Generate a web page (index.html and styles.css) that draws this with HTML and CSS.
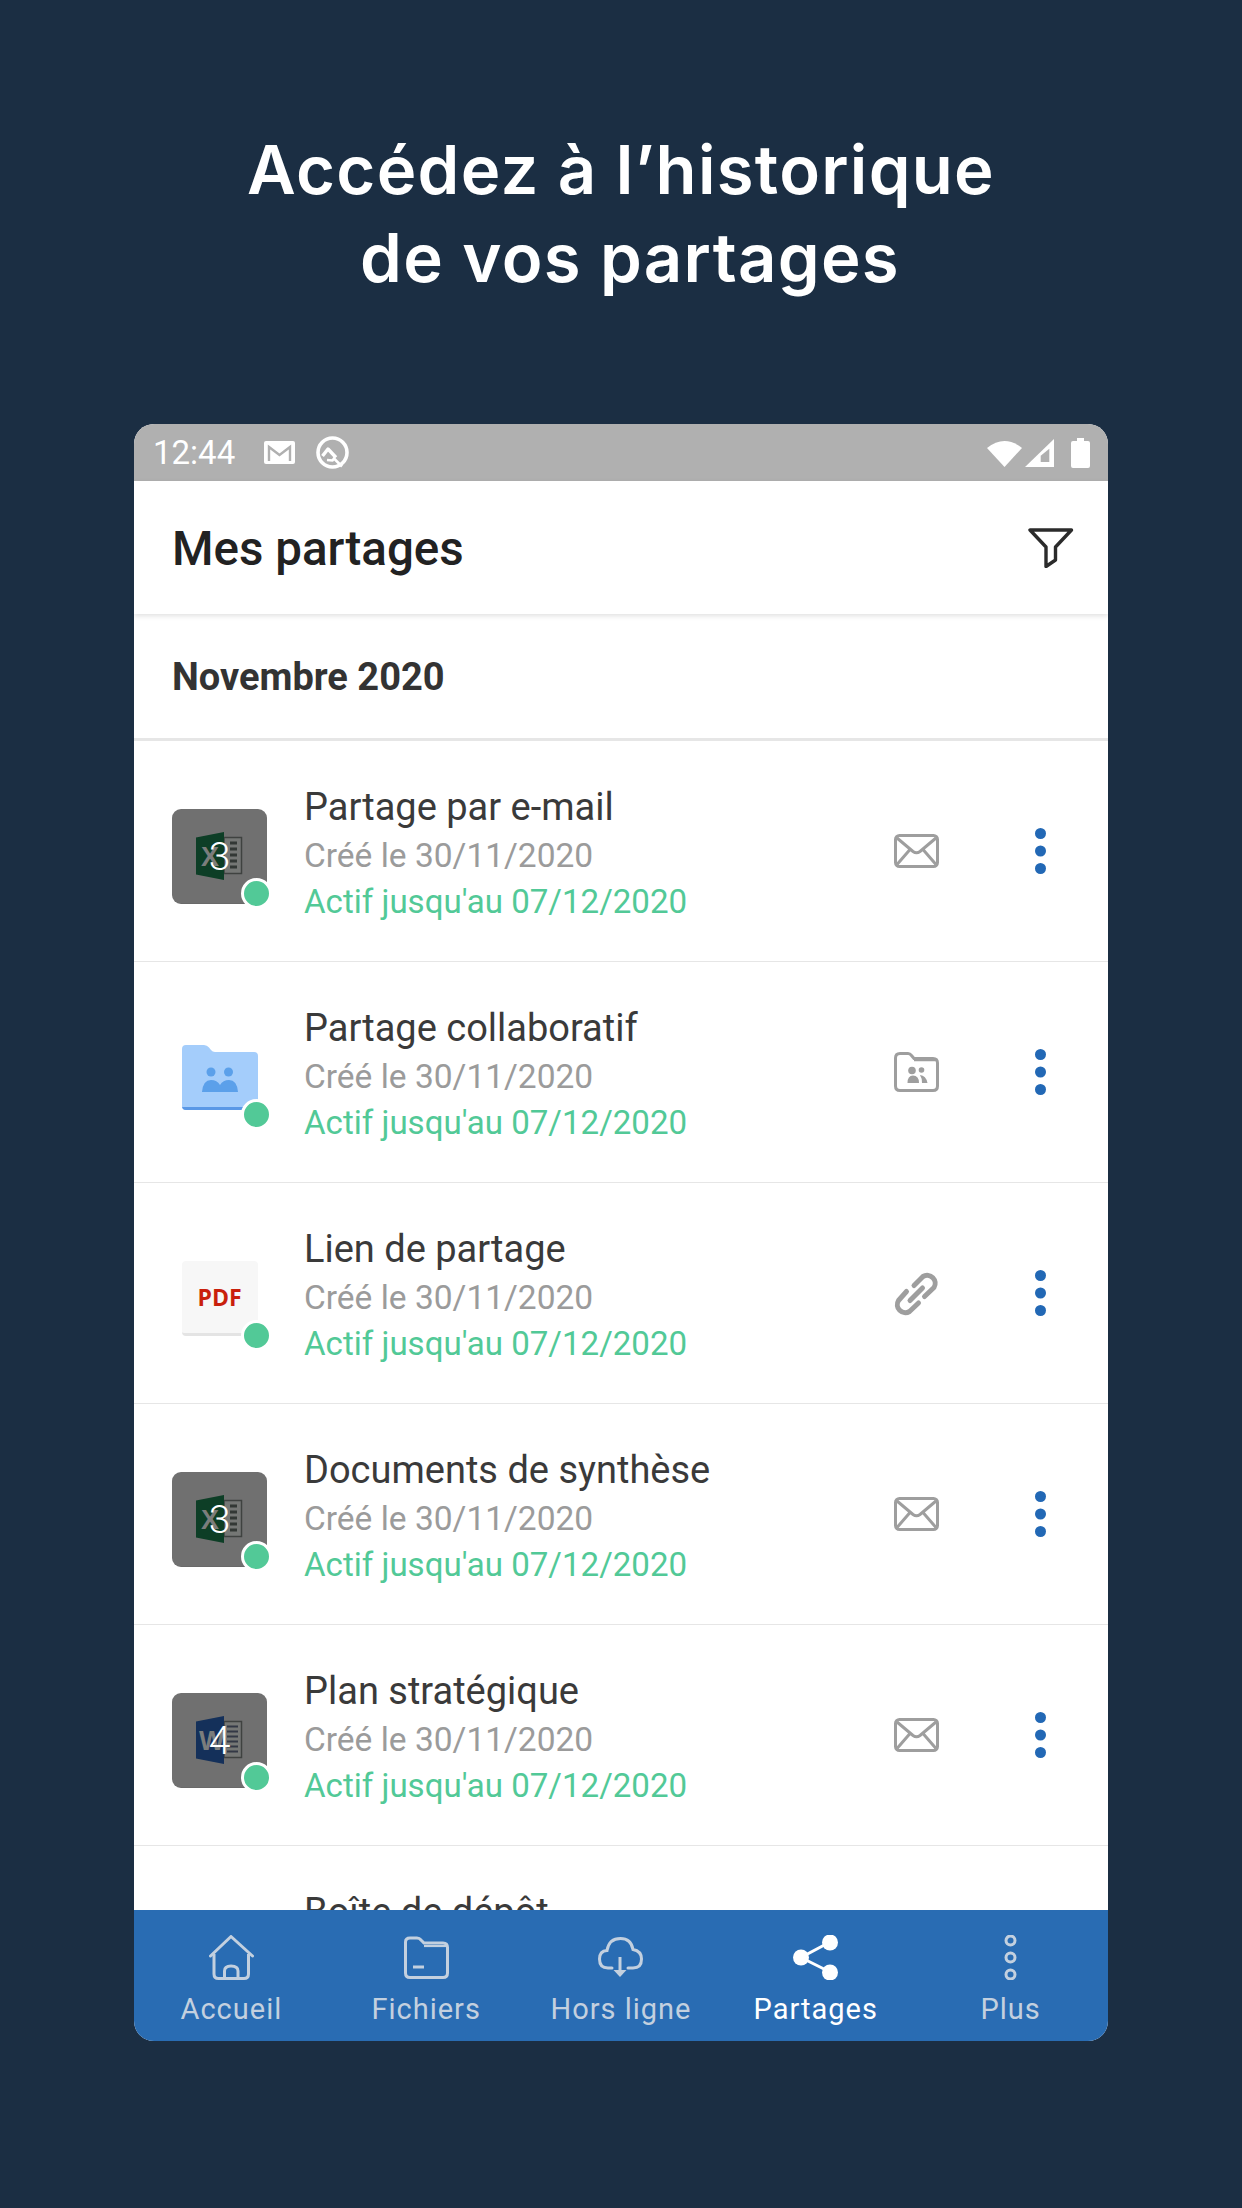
FILE: index.html
```html
<!DOCTYPE html>
<html lang="fr">
<head>
<meta charset="utf-8">
<title>Mes partages</title>
<link rel="stylesheet" href="styles.css">
</head>
<body>
<svg class="defs" width="0" height="0" aria-hidden="true">
  <defs>
    <symbol id="ic-mail" viewBox="0 0 45 34">
      <rect x="1.500" y="1.500" width="42" height="31" rx="4" fill="none" stroke="currentColor" stroke-width="3"/>
      <path d="M3 4 L19 17.500 Q22.500 20 26 17.500 L42 4 M3 30.500 L16 15.500 M42 30.500 L29 15.500" fill="none" stroke="currentColor" stroke-width="3"/>
    </symbol>
    <symbol id="ic-folder-people" viewBox="0 0 45 40">
      <path d="M1.500 6 Q1.500 1.500 6 1.500 H14 Q16 1.500 17.500 3.500 L20 6.500 H39 Q43.500 6.500 43.500 11 V34 Q43.500 38.500 39 38.500 H6 Q1.500 38.500 1.500 34 Z" fill="none" stroke="currentColor" stroke-width="3"/>
      <path d="M20 8.500 H42" fill="none" stroke="currentColor" stroke-width="1.500"/>
      <circle cx="18" cy="18.500" r="3.800" fill="currentColor"/>
      <circle cx="27.500" cy="18" r="2.800" fill="currentColor"/>
      <path d="M13.500 31 Q13.500 23.500 19 23.500 Q25 23.500 25 31 Z M26 23 Q32 23.500 33.500 31 H28 Q28 26 26 23 Z" fill="currentColor"/>
    </symbol>
    <symbol id="ic-link" viewBox="0 0 45 45">
      <g fill="none" stroke="currentColor" stroke-width="5" stroke-linecap="round" stroke-linejoin="round">
        <path d="M20 14.500 L29 5.500 a8 8 0 0 1 11 11 L30.500 25.500"/>
        <path d="M24.500 32 L15.500 40.500 a8 8 0 0 1 -11 -11 L12.500 20.500"/>
        <path d="M16 29.500 L28.500 17"/>
      </g>
    </symbol>
    <symbol id="ic-more" viewBox="0 0 11 46">
      <circle cx="5.500" cy="5.500" r="5.500" fill="currentColor"/>
      <circle cx="5.500" cy="23" r="5.500" fill="currentColor"/>
      <circle cx="5.500" cy="40.500" r="5.500" fill="currentColor"/>
    </symbol>
    <symbol id="thumb-excel" viewBox="0 0 95 95">
      <rect x="52" y="28.500" width="17.500" height="36" fill="#757775" stroke="#3f4240" stroke-width="1.500"/>
      <path d="M58 34 H65 M58 40 H65 M58 46 H65 M58 52 H65 M58 58 H65" stroke="#333835" stroke-width="3"/>
      <path d="M24 28.500 L52 23 V71 L24 65.500 Z" fill="#0d3e26"/>
      <text x="29" y="57" class="thumb-letter">X</text>
    </symbol>
    <symbol id="thumb-word" viewBox="0 0 95 95">
      <rect x="52" y="28.500" width="17.500" height="36" fill="#757775" stroke="#3f4240" stroke-width="1.500"/>
      <path d="M55 33.500 H66 M55 38.500 H66 M55 43.500 H66 M55 48.500 H66 M55 53.500 H66 M55 58.500 H66" stroke="#333845" stroke-width="2.200"/>
      <path d="M24 28.500 L52 23 V71 L24 65.500 Z" fill="#14305a"/>
      <text x="27" y="57" class="thumb-letter">W</text>
    </symbol>
    <symbol id="thumb-folder" viewBox="0 0 76 65">
      <path d="M0 4 Q0 0 4 0 H22 Q25 0 27 2.500 L29 5 Q30.500 7 33 7 H72 Q76 7 76 11 V61 Q76 65 72 65 H4 Q0 65 0 61 Z" fill="#a4cdfb"/>
      <path d="M0 61 Q0 65 4 65 H72 Q76 65 76 61 V62 H0 Z" fill="#5a98e6"/>
      <circle cx="29" cy="27" r="4.500" fill="#5ba0ea"/>
      <circle cx="46.500" cy="27" r="4.500" fill="#5ba0ea"/>
      <path d="M20 47 Q21 35 29 35 Q35 35 38 40 Q41 35 47 35 Q55 35 56 47 Z" fill="#5ba0ea"/>
    </symbol>
    <symbol id="nav-home" viewBox="0 0 45 45">
      <path d="M1.500 21 L22 1.500 L43.500 21" fill="none" stroke="currentColor" stroke-width="3" stroke-linecap="round" stroke-linejoin="round"/>
      <path d="M5 19 V39 Q5 43.500 9.500 43.500 H35 Q39.500 43.500 39.500 39 V19" fill="none" stroke="currentColor" stroke-width="3"/>
      <path d="M15.500 43.500 V36 Q15.500 31 22 31 Q29 31 29 36 V43.500" fill="none" stroke="currentColor" stroke-width="3"/>
    </symbol>
    <symbol id="nav-folder" viewBox="0 0 45 45">
      <path d="M1.500 7 Q1.500 3 6 3 H13 Q15.500 3 17 5 L20 8 H39 Q43.500 8 43.500 12.500 V38 Q43.500 42.500 39 42.500 H6 Q1.500 42.500 1.500 38 Z" fill="none" stroke="currentColor" stroke-width="3"/>
      <path d="M20 11 H42" fill="none" stroke="currentColor" stroke-width="2.200"/>
      <path d="M9 32 H20" fill="none" stroke="currentColor" stroke-width="3"/>
    </symbol>
    <symbol id="nav-cloud" viewBox="0 0 45 45">
      <path d="M14 33 H10 Q1.500 33 1.500 24 Q1.500 16 9 15.500 Q11 3.500 22.500 3.500 Q33 3.500 35 14.500 Q43.500 16 43.500 24 Q43.500 33 35 33 H30" fill="none" stroke="currentColor" stroke-width="3" stroke-linecap="round"/>
      <path d="M22 22 V39" fill="none" stroke="currentColor" stroke-width="3"/>
      <path d="M15.500 35 H28.500 L22 42 Z" fill="currentColor"/>
    </symbol>
    <symbol id="nav-share" viewBox="0 0 45 45">
      <path d="M37 7 L8 22.500 L37 37" fill="none" stroke="currentColor" stroke-width="3"/>
      <circle cx="37" cy="7.500" r="8" fill="currentColor"/>
      <circle cx="8" cy="22.500" r="8" fill="currentColor"/>
      <circle cx="37" cy="37.500" r="8" fill="currentColor"/>
    </symbol>
    <symbol id="nav-more" viewBox="0 0 45 45">
      <circle cx="22.500" cy="5.500" r="4.500" fill="none" stroke="currentColor" stroke-width="3"/>
      <circle cx="22.500" cy="22.500" r="4.500" fill="none" stroke="currentColor" stroke-width="3"/>
      <circle cx="22.500" cy="39.500" r="4.500" fill="none" stroke="currentColor" stroke-width="3"/>
    </symbol>
  </defs>
</svg>

<main class="page">
  <h1 class="headline">Accédez à l’historique<br><span class="headline-second">de vos partages</span></h1>

  <section class="phone">
    <div class="statusbar">
      <span class="clock">12:44</span>
      <svg class="st-gmail" viewBox="0 0 31 23"><rect width="31" height="23" rx="2" fill="#fff"/><path d="M5 20 V6 L15.500 14 L26 6 V20" fill="none" stroke="#b0b0b0" stroke-width="2.400"/></svg>
      <svg class="st-ring" viewBox="0 0 33 33"><circle cx="16.500" cy="16.500" r="14.500" fill="none" stroke="#fff" stroke-width="3.600"/><path d="M6.500 20 L12 13 L20 21.500" fill="none" stroke="#fff" stroke-width="3.400" stroke-linejoin="round"/><path d="M11 24 L16.500 24.500 L18 22.500 L26 30.500" fill="none" stroke="#fff" stroke-width="2.600"/></svg>
      <span class="status-spacer"></span>
      <svg class="st-wifi" viewBox="0 0 35 28"><path d="M0 9 Q17.500 -5 35 9 L17.500 28 Z" fill="#fff"/></svg>
      <svg class="st-signal" viewBox="0 0 29 28"><path d="M29 0 V28 H0 Z" fill="#fff"/><path d="M15.700 16.700 L24.300 9.700 V23 H15.700 Z" fill="#b0b0b0"/></svg>
      <svg class="st-battery" viewBox="0 0 19 30"><path d="M6 0 H13 V3 H17 Q19 3 19 5 V28 Q19 30 17 30 H2 Q0 30 0 28 V5 Q0 3 2 3 H6 Z" fill="#fff"/></svg>
    </div>

    <header class="appbar">
      <h2 class="appbar-title">Mes partages</h2>
      <svg class="filter" viewBox="0 0 46 40"><path d="M2 2 H43.500 L27.500 19 V32 L18 38.500 V19 Z" fill="none" stroke="#2b2b2b" stroke-width="3.400" stroke-linejoin="round"/></svg>
    </header>

    <div class="month">Novembre 2020</div>

    <div class="list">
      <article class="row">
        <div class="thumb thumb-count">
          <svg class="thumb-file"><use href="#thumb-excel"/></svg>
          <span class="count">3</span>
          <span class="dot"></span>
        </div>
        <div class="info">
          <div class="name">Partage par e-mail</div>
          <div class="created">Créé le 30/11/2020</div>
          <div class="active">Actif jusqu'au 07/12/2020</div>
        </div>
        <svg class="type type-mail"><use href="#ic-mail"/></svg>
        <svg class="more"><use href="#ic-more"/></svg>
      </article>

      <article class="row">
        <div class="thumb">
          <svg class="thumb-folder"><use href="#thumb-folder"/></svg>
          <span class="dot dot-plain"></span>
        </div>
        <div class="info">
          <div class="name">Partage collaboratif</div>
          <div class="created">Créé le 30/11/2020</div>
          <div class="active">Actif jusqu'au 07/12/2020</div>
        </div>
        <svg class="type type-folder"><use href="#ic-folder-people"/></svg>
        <svg class="more"><use href="#ic-more"/></svg>
      </article>

      <article class="row">
        <div class="thumb">
          <div class="thumb-pdf">PDF</div>
          <span class="dot dot-plain"></span>
        </div>
        <div class="info">
          <div class="name">Lien de partage</div>
          <div class="created">Créé le 30/11/2020</div>
          <div class="active">Actif jusqu'au 07/12/2020</div>
        </div>
        <svg class="type type-link"><use href="#ic-link"/></svg>
        <svg class="more"><use href="#ic-more"/></svg>
      </article>

      <article class="row">
        <div class="thumb thumb-count">
          <svg class="thumb-file"><use href="#thumb-excel"/></svg>
          <span class="count">3</span>
          <span class="dot"></span>
        </div>
        <div class="info">
          <div class="name">Documents de synthèse</div>
          <div class="created">Créé le 30/11/2020</div>
          <div class="active">Actif jusqu'au 07/12/2020</div>
        </div>
        <svg class="type type-mail"><use href="#ic-mail"/></svg>
        <svg class="more"><use href="#ic-more"/></svg>
      </article>

      <article class="row">
        <div class="thumb thumb-count">
          <svg class="thumb-file"><use href="#thumb-word"/></svg>
          <span class="count">4</span>
          <span class="dot"></span>
        </div>
        <div class="info">
          <div class="name">Plan stratégique</div>
          <div class="created">Créé le 30/11/2020</div>
          <div class="active">Actif jusqu'au 07/12/2020</div>
        </div>
        <svg class="type type-mail"><use href="#ic-mail"/></svg>
        <svg class="more"><use href="#ic-more"/></svg>
      </article>

      <article class="row">
        <div class="thumb"></div>
        <div class="info">
          <div class="name">Boîte de dépôt</div>
        </div>
      </article>
    </div>

    <nav class="tabbar">
      <div class="tab"><svg class="tab-icon"><use href="#nav-home"/></svg><span>Accueil</span></div>
      <div class="tab"><svg class="tab-icon"><use href="#nav-folder"/></svg><span>Fichiers</span></div>
      <div class="tab"><svg class="tab-icon"><use href="#nav-cloud"/></svg><span>Hors ligne</span></div>
      <div class="tab tab-active"><svg class="tab-icon"><use href="#nav-share"/></svg><span>Partages</span></div>
      <div class="tab"><svg class="tab-icon"><use href="#nav-more"/></svg><span>Plus</span></div>
    </nav>
  </section>
</main>
</body>
</html>
```

FILE: styles.css
```css
* { box-sizing: border-box; }

html, body {
  margin: 0;
  padding: 0;
  background: #1b2e43;
}

.defs { position: absolute; }

.thumb-letter {
  font-family: "Liberation Sans", sans-serif;
  font-weight: 700;
  font-size: 27px;
  fill: #7b7d7c;
}

.page {
  width: 1242px;
  height: 2208px;
  padding-top: 126px;
  display: flex;
  flex-direction: column;
  align-items: center;
  overflow: hidden;
}

.headline {
  margin: 0 0 122px;
  font-family: Inter, "Open Sans", sans-serif;
  font-weight: 600;
  font-size: 67px;
  line-height: 88px;
  letter-spacing: 1.3px;
  color: #fff;
  text-align: center;
}

.headline-second { padding-left: 18px; }

.phone {
  width: 974px;
  height: 1617px;
  display: flex;
  flex-direction: column;
  background: #fff;
  border-radius: 20px;
  overflow: hidden;
  font-family: Roboto, sans-serif;
  flex: none;
}

.statusbar {
  height: 57px;
  flex: none;
  background: #b0b0b0;
  display: flex;
  align-items: center;
  padding: 0 18px 0 19px;
}

.clock {
  font-size: 33px;
  color: #fff;
  width: 84px;
  margin-right: 27px;
  line-height: 57px;
}

.st-gmail { width: 31px; height: 23px; margin-right: 21px; }
.st-ring { width: 33px; height: 33px; }
.status-spacer { flex: 1; }
.st-wifi { width: 35px; height: 28px; margin-right: 3px; }
.st-signal { width: 29px; height: 28px; margin-right: 17px; }
.st-battery { width: 19px; height: 30px; }

.appbar {
  height: 133px;
  flex: none;
  display: flex;
  align-items: center;
  justify-content: space-between;
  padding: 0 34px 0 38px;
  position: relative;
  box-shadow: 0 2px 5px rgba(0, 0, 0, 0.12);
}

.appbar-title {
  margin: 3px 0 0;
  font-weight: 500;
  font-size: 47.500px;
  line-height: 130px;
  color: #222;
}

.filter { width: 46px; height: 40px; }

.month {
  height: 127px;
  flex: none;
  padding: 0 38px;
  border-bottom: 3px solid #e6e6e6;
  font-weight: 700;
  font-size: 38px;
  line-height: 126px;
  color: #333;
}

.list {
  flex: 1;
  min-height: 0;
  overflow: hidden;
}

.row {
  height: 221px;
  display: flex;
  align-items: flex-start;
  padding: 0 44px 0 38px;
  border-bottom: 1px solid #e6e6e6;
}

.thumb {
  position: relative;
  width: 95px;
  height: 95px;
  flex: none;
  margin: 68px 37px 0 0;
  display: flex;
  align-items: flex-start;
  justify-content: center;
}

.thumb-count {
  background: #707070;
  border-radius: 9px;
  box-shadow: inset 0 -9px 0 -8px rgba(0, 0, 0, 0.06);
}

.thumb-file { width: 95px; height: 95px; }

.thumb-folder {
  width: 76px;
  height: 65px;
  margin-top: 15px;
}

.thumb-pdf {
  width: 76px;
  height: 75px;
  margin-top: 10px;
  background: #f7f7f7;
  border-bottom: 3px solid #e4e4e4;
  border-radius: 4px;
  font-family: "Open Sans", sans-serif;
  font-weight: 700;
  font-size: 23px;
  line-height: 72px;
  text-align: center;
  color: #c91f0c;
}

.count {
  position: absolute;
  left: 0;
  right: 0;
  top: 25px;
  text-align: center;
  font-weight: 300;
  font-size: 39px;
  line-height: 46px;
  color: #fff;
}

.dot {
  position: absolute;
  left: 69px;
  top: 69px;
  width: 31px;
  height: 31px;
  border-radius: 50%;
  background: #52c997;
  border: 3px solid #fff;
}

.info {
  flex: 1;
  min-width: 0;
  padding-top: 41px;
}

.name {
  font-size: 38px;
  line-height: 51px;
  color: #3a3a3a;
}

.created {
  font-size: 33.500px;
  line-height: 46px;
  color: #9b9b9b;
}

.active {
  font-size: 33.100px;
  line-height: 46px;
  color: #52c997;
}

.type {
  width: 45px;
  color: #9e9e9e;
  flex: none;
  margin-right: 78px;
}

.type-mail { height: 34px; margin-top: 93px; }
.type-folder { height: 40px; margin-top: 90px; }
.type-link { height: 45px; margin-top: 88px; }

.more {
  width: 11px;
  height: 46px;
  flex: none;
  color: #2268b5;
  margin: 87px 18px 0 18px;
}

.tabbar {
  height: 131px;
  flex: none;
  background: #296cb3;
  display: grid;
  grid-template-columns: repeat(5, 1fr);
  padding-top: 25px;
  position: relative;
}

.tab {
  display: flex;
  flex-direction: column;
  align-items: center;
  color: #c3d0df;
  font-size: 29px;
  line-height: 44px;
  letter-spacing: 1px;
}

.tab-icon { width: 45px; height: 45px; margin-bottom: 7px; }
.tab-active { color: #fff; }
```
